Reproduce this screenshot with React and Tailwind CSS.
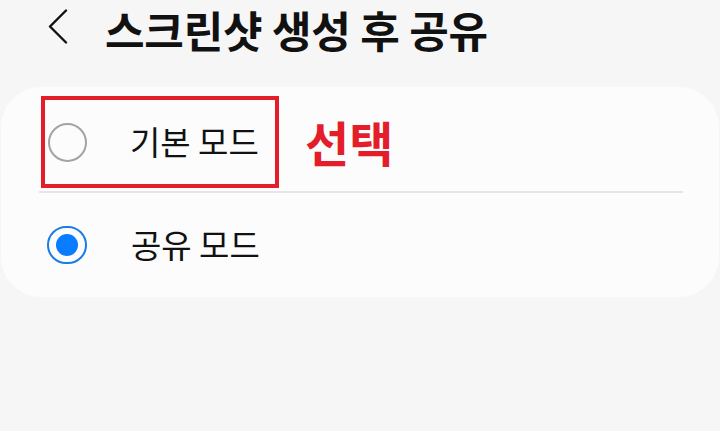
import React, { useState } from 'react';

const FONT = { fontFamily: '"Noto Sans CJK KR", "Noto Sans", sans-serif' };

const Radio = ({ checked }) =>
    checked ? (
        <span className="flex h-[38px] w-[40px] shrink-0 items-center justify-center rounded-full border-[2.5px] border-[#1b7ce6]">
            <span className="h-[22px] w-[22px] rounded-full bg-[#0a7cff]" />
        </span>
    ) : (
        <span className="h-[39px] w-[39px] shrink-0 rounded-full border-2 border-[#a3a3a3]" />
    );

const BackIcon = () => (
    <svg width="20" height="35" viewBox="0 0 20 35" fill="none">
        <polyline points="18,1.5 2,17.5 18,33.5" stroke="#111" strokeWidth="2.4" strokeLinecap="round" strokeLinejoin="round" />
    </svg>
);

export default function App() {
    const [mode, setMode] = useState('share');

    return (
        <div className="h-[431px] w-[720px] overflow-hidden bg-[#f6f6f6]" style={FONT}>
            {/* header */}
            <div className="flex h-[60px] items-center pl-[48px]">
                <span className="-mt-[7px] flex">
                    <BackIcon />
                </span>
                <h1 className="ml-[37px] text-[43px] font-bold leading-[1.3] tracking-[-0.2px] text-[#111]">스크린샷 생성 후 공유</h1>
            </div>

            {/* options card */}
            <div className="mx-[1px] mt-[27px] rounded-[40px] bg-[#fcfcfd] pl-[38px] pr-[36px]">
                <div className="flex items-center pt-[9px]">
                    <button
                        onClick={() => setMode('basic')}
                        className="ml-[2px] flex h-[92px] w-[238px] items-center border-4 border-[#e31e2a] pl-[3px]"
                    >
                        <Radio checked={mode === 'basic'} />
                        <span className="ml-[43px] text-[33px] leading-[1.2] text-[#111]">기본 모드</span>
                    </button>
                    <span className="ml-[26px] text-[48px] font-bold leading-[1.2] text-[#e31e2a]">선택</span>
                </div>
                <div className="mt-[3px] h-[2px] bg-[#e6e6e9]" />
                <button onClick={() => setMode('share')} className="flex h-[104px] w-full items-center pl-[8px]">
                    <Radio checked={mode === 'share'} />
                    <span className="ml-[44px] text-[33px] leading-[1.2] text-[#111]">공유 모드</span>
                </button>
            </div>
        </div>
    );
}
